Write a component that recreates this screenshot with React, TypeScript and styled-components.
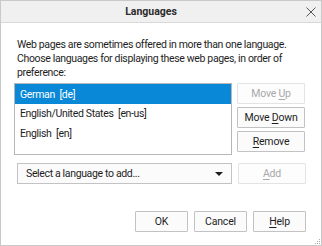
import React from "react";
import styled, { createGlobalStyle } from "styled-components";

const Global = createGlobalStyle`
  html, body { margin: 0; padding: 0; background: #ffffff; }
  * { box-sizing: border-box; }
`;

const FONT = `Roboto, "Noto Sans", sans-serif`;

const Window = styled.div`
  width: 322px;
  height: 246px;
  border: 1px solid #c9c9c9;
  background: #ffffff;
  display: flex;
  flex-direction: column;
  font-family: ${FONT};
  font-size: 10.5px;
  letter-spacing: -0.35px;
  color: #1e1e1e;
  position: relative;
`;

const TitleBar = styled.div`
  height: 22px;
  flex: none;
  background: #f0f0f0;
  border-bottom: 1px solid #d9d9d9;
  display: flex;
  align-items: center;
  justify-content: center;
  padding-right: 20px;
  position: relative;
`;

const Title = styled.div`
  font-weight: 700;
  font-size: 10.5px;
  letter-spacing: 0;
  color: #2b2b2b;
`;

const Close = styled.div`
  position: absolute;
  right: 4px;
  top: 5px;
  width: 12px;
  height: 12px;
  display: flex;
`;

const Body = styled.div`
  flex: 1;
  display: flex;
  flex-direction: column;
  padding: 15px 15px 13px 13px;
`;

const Intro = styled.p`
  margin: 0 0 3px 3px;
  line-height: 14px;
  white-space: nowrap;
`;

const ListRow = styled.div`
  display: flex;
  gap: 5px;
`;

const ListBox = styled.div`
  width: 218px;
  height: 72px;
  border: 1px solid #b7b7b7;
  background: #ffffff;
  display: flex;
  flex-direction: column;
`;

const Item = styled.div<{ $selected?: boolean }>`
  height: ${(p) => (p.$selected ? "20px" : "19.5px")};
  display: flex;
  align-items: center;
  padding-left: 5px;
  white-space: pre;
  background: ${(p) => (p.$selected ? "#0a88d8" : "transparent")};
  color: ${(p) => (p.$selected ? "#ffffff" : "#1e1e1e")};
`;

const ButtonColumn = styled.div`
  display: flex;
  flex-direction: column;
  gap: 3px;
`;

const Button = styled.div<{ $disabled?: boolean; $w?: number }>`
  width: ${(p) => p.$w ?? 68}px;
  height: 21px;
  border: 1px solid ${(p) => (p.$disabled ? "#e3e3e3" : "#c2c2c2")};
  background: ${(p) => (p.$disabled ? "#fdfdfd" : "#fbfbfb")};
  color: ${(p) => (p.$disabled ? "#a8a8a8" : "#1e1e1e")};
  display: flex;
  align-items: center;
  justify-content: center;
  border-radius: 1px;
  white-space: pre;
  letter-spacing: -0.2px;
`;

const Key = styled.span`
  text-decoration: underline;
  text-underline-offset: 2px;
  text-decoration-thickness: 1px;
`;

const AddRow = styled.div`
  display: flex;
  gap: 6px;
  margin-top: 8px;
  padding-left: 3px;
`;

const Select = styled.div`
  width: 215px;
  height: 21px;
  border: 1px solid #c3c3c3;
  background: #fbfbfb;
  display: flex;
  align-items: center;
  justify-content: space-between;
  padding: 0 8px 0 8px;
`;

const Arrow = styled.div`
  width: 0;
  height: 0;
  border-left: 4px solid transparent;
  border-right: 4px solid transparent;
  border-top: 4px solid #1e1e1e;
`;

const Footer = styled.div`
  margin-top: auto;
  display: flex;
  justify-content: flex-end;
  gap: 6px;
`;

const Grip = styled.div`
  position: absolute;
  right: 1px;
  bottom: 1px;
  width: 5px;
  height: 5px;
  display: flex;
`;

export default function App() {
  return (
    <>
      <Global />
      <Window>
        <TitleBar>
          <Title>Languages</Title>
          <Close>
            <svg width="12" height="12" viewBox="0 0 12 12">
              <path d="M1.5 1.5 L10.5 10.5 M10.5 1.5 L1.5 10.5" stroke="#555" strokeWidth="1" fill="none" />
            </svg>
          </Close>
        </TitleBar>
        <Body>
          <Intro>
            Web pages are sometimes offered in more than one language.
            <br />
            Choose languages for displaying these web pages, in order of
            <br />
            preference:
          </Intro>
          <ListRow>
            <ListBox>
              <Item $selected>{"German  [de]"}</Item>
              <Item>{"English/United States  [en-us]"}</Item>
              <Item>{"English  [en]"}</Item>
            </ListBox>
            <ButtonColumn>
              <Button $disabled>
                Move <Key>U</Key>p
              </Button>
              <Button>
                Move <Key>D</Key>own
              </Button>
              <Button>
                <Key>R</Key>emove
              </Button>
            </ButtonColumn>
          </ListRow>
          <AddRow>
            <Select>
              <span>Select a language to add...</span>
              <Arrow />
            </Select>
            <Button $disabled>
              <Key>A</Key>dd
            </Button>
          </AddRow>
          <Footer>
            <Button $w={53}>OK</Button>
            <Button $w={53}>Cancel</Button>
            <Button $w={53}>
              <Key>H</Key>elp
            </Button>
          </Footer>
        </Body>
        <Grip>
          <svg width="5" height="5" viewBox="0 0 5 5">
            <rect x="4" y="0" width="1" height="1" fill="#aaa" />
            <rect x="2" y="2" width="1" height="1" fill="#aaa" />
            <rect x="4" y="2" width="1" height="1" fill="#aaa" />
            <rect x="0" y="4" width="1" height="1" fill="#aaa" />
            <rect x="2" y="4" width="1" height="1" fill="#aaa" />
            <rect x="4" y="4" width="1" height="1" fill="#aaa" />
          </svg>
        </Grip>
      </Window>
    </>
  );
}
